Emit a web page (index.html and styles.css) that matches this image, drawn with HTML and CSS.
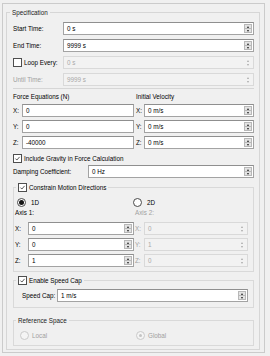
FILE: index.html
```html
<!DOCTYPE html>
<html>
<head>
<meta charset="utf-8">
<link rel="stylesheet" href="styles.css">
</head>
<body>
<div class="frame">
  <fieldset class="grp spec">
    <legend class="lg lg-spec">Specification</legend>
    <div class="rows">
      <div class="row"><span class="lbl w50">Start Time:</span><div class="spin"><span class="val">0 s</span><span class="btns"><i class="up"></i><i class="dn"></i></span></div></div>
      <div class="row"><span class="lbl w50">End Time:</span><div class="spin"><span class="val">9999 s</span><span class="btns"><i class="up"></i><i class="dn"></i></span></div></div>
      <div class="row"><span class="lbl w50 opt"><span class="cb"></span>Loop Every:</span><div class="spin dis"><span class="val">0 s</span><span class="btns"><i class="up"></i><i class="dn"></i></span></div></div>
      <div class="row"><span class="lbl w50 muted">Until Time:</span><div class="spin dis"><span class="val">9999 s</span><span class="btns"><i class="up"></i><i class="dn"></i></span></div></div>
    </div>
    <div class="sep"></div>
    <div class="force">
      <div class="col">
        <div class="hdr">Force Equations (N)</div>
        <div class="row"><span class="lbl w9">X:</span><div class="spin"><span class="val">0</span></div></div>
        <div class="row"><span class="lbl w9">Y:</span><div class="spin"><span class="val">0</span></div></div>
        <div class="row"><span class="lbl w9">Z:</span><div class="spin"><span class="val">-40000</span></div></div>
      </div>
      <div class="col">
        <div class="hdr">Initial Velocity</div>
        <div class="row"><span class="lbl w8">X:</span><div class="spin"><span class="val">0 m/s</span><span class="btns"><i class="up"></i><i class="dn"></i></span></div></div>
        <div class="row"><span class="lbl w8">Y:</span><div class="spin"><span class="val">0 m/s</span><span class="btns"><i class="up"></i><i class="dn"></i></span></div></div>
        <div class="row"><span class="lbl w8">Z:</span><div class="spin"><span class="val">0 m/s</span><span class="btns"><i class="up"></i><i class="dn"></i></span></div></div>
      </div>
    </div>
    <div class="opt gravity"><span class="cb"><svg viewBox="0 0 9 9"><path d="M1.8 4.6 L3.7 6.5 L7.2 2.4"/></svg></span>Include Gravity in Force Calculation</div>
    <div class="row damp"><span class="lbl w75">Damping Coefficient:</span><div class="spin"><span class="val">0 Hz</span><span class="btns"><i class="up"></i><i class="dn"></i></span></div></div>

    <fieldset class="grp sub constrain">
      <legend class="lg lg-con opt"><span class="cb"><svg viewBox="0 0 9 9"><path d="M1.8 4.6 L3.7 6.5 L7.2 2.4"/></svg></span>Constrain Motion Directions</legend>
      <div class="axes">
        <div class="col">
          <div class="opt radio-row r1"><span class="rb on"></span>1D</div>
          <div class="axis-lbl">Axis 1:</div>
          <div class="row"><span class="lbl w13">X:</span><div class="spin"><span class="val">0</span><span class="btns"><i class="up"></i><i class="dn"></i></span></div></div>
          <div class="row"><span class="lbl w13">Y:</span><div class="spin"><span class="val">0</span><span class="btns"><i class="up"></i><i class="dn"></i></span></div></div>
          <div class="row"><span class="lbl w13">Z:</span><div class="spin"><span class="val">1</span><span class="btns"><i class="up"></i><i class="dn"></i></span></div></div>
        </div>
        <div class="col">
          <div class="opt radio-row r2"><span class="rb"></span>2D</div>
          <div class="axis-lbl muted">Axis 2:</div>
          <div class="row"><span class="lbl w9 muted">X:</span><div class="spin dis"><span class="val">0</span><span class="btns"><i class="up"></i><i class="dn"></i></span></div></div>
          <div class="row"><span class="lbl w9 muted">Y:</span><div class="spin dis"><span class="val">1</span><span class="btns"><i class="up"></i><i class="dn"></i></span></div></div>
          <div class="row"><span class="lbl w9 muted">Z:</span><div class="spin dis"><span class="val">0</span><span class="btns"><i class="up"></i><i class="dn"></i></span></div></div>
        </div>
      </div>
    </fieldset>

    <fieldset class="grp sub speed">
      <legend class="lg lg-speed opt"><span class="cb"><svg viewBox="0 0 9 9"><path d="M1.8 4.6 L3.7 6.5 L7.2 2.4"/></svg></span>Enable Speed Cap</legend>
      <div class="row"><span class="lbl w35">Speed Cap:</span><div class="spin"><span class="val">1 m/s</span><span class="btns"><i class="up"></i><i class="dn"></i></span></div></div>
    </fieldset>

    <fieldset class="grp sub ref">
      <legend class="lg lg-ref">Reference Space</legend>
      <div class="radios">
        <div class="opt muted"><span class="rb dis"></span>Local</div>
        <div class="opt muted"><span class="rb dis on"></span>Global</div>
      </div>
    </fieldset>
  </fieldset>
</div>
</body>
</html>
```
FILE: styles.css
```css
* { box-sizing: border-box; }
body {
  margin: 0;
  background: #f0f0f0;
  font-family: "Liberation Sans", Arial, sans-serif;
  font-size: 6.3px;
  line-height: 9px;
  color: #000;
}
.frame {
  margin: 3px 5px 0 2px;
  width: 263px;
  border: 1px solid #cbcbcb;
  padding: 4px 4px 2px 3px;
}
.grp {
  margin: 0;
  min-width: 0;
  border: 1px solid #d6d6d6;
}
.spec { padding: 5px 5px 3px 6px; }
.lg {
  height: 9px;
  line-height: 9px;
  padding: 0 2px;
  white-space: nowrap;
}
.lg-spec { margin-left: -3px; color: #1a1a1a; }
.rows { display: flex; flex-direction: column; gap: 4px; }
.row { display: flex; align-items: center; height: 13px; }
.lbl { flex: none; white-space: nowrap; }
.w8 { width: 8px; }
.w9 { width: 9px; }
.w13 { width: 13px; }
.w35 { width: 35px; }
.w50 { width: 50px; }
.w75 { width: 75px; }
.muted { color: #a0a0a0; }
.opt { display: flex; align-items: center; white-space: nowrap; }
.spin {
  flex: 1;
  min-width: 0;
  height: 13px;
  display: flex;
  border: 1px solid #a3a3a3;
  border-top-color: #8f8f8f;
  background: #fff;
}
.spin .val { flex: 1; padding-left: 3px; line-height: 11px; white-space: nowrap; }
.btns {
  flex: none;
  width: 8px;
  margin: 1px 1px 1px 0;
  display: flex;
  flex-direction: column;
}
.btns i {
  flex: 1;
  display: flex;
  align-items: center;
  justify-content: center;
  background: #e3e3e3;
  border: 1px solid #b8b8b8;
}
.btns i + i { border-top: none; }
.btns i::before {
  content: "";
  border-left: 1.5px solid transparent;
  border-right: 1.5px solid transparent;
}
.up::before { border-bottom: 2px solid #222; }
.dn::before { border-top: 2px solid #222; }
.spin.dis { background: #f2f2f2; border-color: #d9d9d9; color: #a8a8a8; }
.spin.dis .btns i { background: transparent; border-color: transparent; }
.spin.dis .up::before { border-bottom-color: #a8a8a8; }
.spin.dis .dn::before { border-top-color: #a8a8a8; }

.cb {
  flex: none;
  width: 9px;
  height: 9px;
  margin-right: 2px;
  border: 1px solid #4e4e4e;
  background: #fff;
  display: flex;
}
.cb svg { width: 7px; height: 7px; }
.cb path { fill: none; stroke: #2b2b2b; stroke-width: 1; }

.sep { border-top: 1px solid #d6d6d6; margin: 2px 0 4px; }
.force {
  display: grid;
  grid-template-columns: 121px 118px;
  column-gap: 2px;
}
.force .col { display: flex; flex-direction: column; gap: 3px; }
.hdr { height: 8px; line-height: 8px; }
.gravity { margin-top: 5px; height: 9px; }
.damp { margin-top: 2px; }

.sub { border-color: #d9d9d9; }
.constrain { margin-top: 5px; padding: 6px 5px 4px 1px; }
.lg-con { margin-left: 1px; }
.axes {
  display: grid;
  grid-template-columns: 119px 113px;
  column-gap: 1px;
}
.axes .col { display: flex; flex-direction: column; gap: 3px; }
.radio-row { height: 9px; }
.r1 .rb { margin-left: 2px; margin-right: 5px; }
.r2 .rb { margin-left: -2px; margin-right: 5px; }
.axis-lbl { height: 8px; line-height: 8px; margin: -1px 0 2px; }
.rb {
  flex: none;
  width: 9px;
  height: 9px;
  border-radius: 50%;
  border: 1px solid #4a4a4a;
  background: #fff;
  display: flex;
  align-items: center;
  justify-content: center;
}
.rb.on::after {
  content: "";
  width: 5px;
  height: 5px;
  border-radius: 50%;
  background: #151515;
}
.rb.dis { border-color: #cacaca; background: #f4f4f4; }
.rb.dis.on::after { width: 3px; height: 3px; background: #c4c4c4; }

.speed { margin-top: 4px; padding: 4px 5px 5px 8px; }
.lg-speed { margin-left: -6px; }

.ref { margin-top: 8px; padding: 6px 5px 5px 6px; }
.lg-ref { margin-left: -4px; color: #1a1a1a; }
.radios { display: grid; grid-template-columns: 116px 1fr; height: 9px; }
.radios .rb { margin-right: 3px; }
```
